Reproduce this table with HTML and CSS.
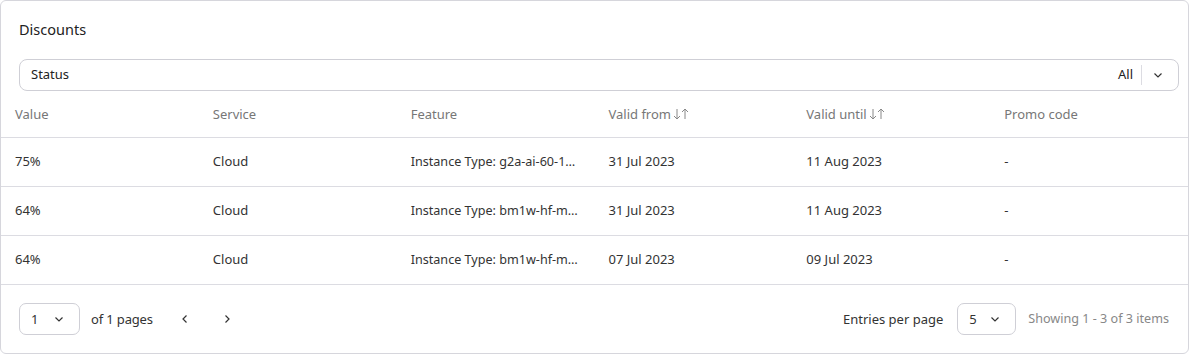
FILE: index.html
```html
<!DOCTYPE html>
<html>
<head>
<meta charset="utf-8">
<link rel="stylesheet" href="styles.css">
</head>
<body>
<div class="card">
  <div class="top">
    <div class="title">Discounts</div>
    <div class="filter">
      <span class="filter-label">Status</span>
      <span class="filter-value">All</span>
      <span class="filter-sep"></span>
      <svg class="chev" width="12" height="12" viewBox="0 0 12 12"><path d="M2.5 4.5 L6 8 L9.5 4.5" fill="none" stroke="#333" stroke-width="1.2"/></svg>
    </div>
  </div>
  <div class="table">
    <div class="row head">
      <div class="cell">Value</div>
      <div class="cell">Service</div>
      <div class="cell">Feature</div>
      <div class="cell sortable">Valid from <svg class="sort" width="16" height="12" viewBox="0 0 16 12"><path d="M4 1 V11 M1 8 L4 11 L7 8 M12 11 V1 M9 4 L12 1 L15 4" fill="none" stroke="#888" stroke-width="1"/></svg></div>
      <div class="cell sortable">Valid until <svg class="sort" width="16" height="12" viewBox="0 0 16 12"><path d="M4 1 V11 M1 8 L4 11 L7 8 M12 11 V1 M9 4 L12 1 L15 4" fill="none" stroke="#888" stroke-width="1"/></svg></div>
      <div class="cell">Promo code</div>
    </div>
    <div class="row">
      <div class="cell">75%</div>
      <div class="cell">Cloud</div>
      <div class="cell feat">Instance Type: g2a-ai-60-1…</div>
      <div class="cell">31 Jul 2023</div>
      <div class="cell">11 Aug 2023</div>
      <div class="cell">-</div>
    </div>
    <div class="row">
      <div class="cell">64%</div>
      <div class="cell">Cloud</div>
      <div class="cell feat">Instance Type: bm1w-hf-m…</div>
      <div class="cell">31 Jul 2023</div>
      <div class="cell">11 Aug 2023</div>
      <div class="cell">-</div>
    </div>
    <div class="row">
      <div class="cell">64%</div>
      <div class="cell">Cloud</div>
      <div class="cell feat">Instance Type: bm1w-hf-m…</div>
      <div class="cell">07 Jul 2023</div>
      <div class="cell">09 Jul 2023</div>
      <div class="cell">-</div>
    </div>
  </div>
  <div class="footer">
    <div class="pager">
      <div class="mini-select"><span>1</span><svg width="12" height="12" viewBox="0 0 12 12"><path d="M2.5 4.5 L6 8 L9.5 4.5" fill="none" stroke="#333" stroke-width="1.2"/></svg></div>
      <span class="pages">of 1 pages</span>
      <svg class="nav prev" width="12" height="12" viewBox="0 0 12 12"><path d="M7.5 2.5 L4 6 L7.5 9.5" fill="none" stroke="#333" stroke-width="1.2"/></svg>
      <svg class="nav next" width="12" height="12" viewBox="0 0 12 12"><path d="M4.5 2.5 L8 6 L4.5 9.5" fill="none" stroke="#333" stroke-width="1.2"/></svg>
    </div>
    <div class="entries">
      <span class="entries-label">Entries per page</span>
      <div class="mini-select"><span>5</span><svg width="12" height="12" viewBox="0 0 12 12"><path d="M2.5 4.5 L6 8 L9.5 4.5" fill="none" stroke="#333" stroke-width="1.2"/></svg></div>
      <span class="showing">Showing 1 - 3 of 3 items</span>
    </div>
  </div>
</div>
</body>
</html>
```

FILE: styles.css
```css
* { box-sizing: border-box; }
html, body { margin: 0; padding: 0; background: #fff; }
body {
  font-family: "Noto Sans", "Open Sans", sans-serif;
  font-size: 13px;
  color: #333;
}
.card {
  width: 1189px;
  height: 354px;
  border: 1px solid #d6d6dc;
  border-radius: 6px;
  display: flex;
  flex-direction: column;
}
.top { padding: 16px 9px 0 18px; }
.title {
  font-size: 14.5px;
  line-height: 24px;
  color: #222;
}
.filter {
  margin-top: 18px;
  height: 32px;
  border: 1px solid #cfcfd6;
  border-radius: 8px;
  display: flex;
  align-items: center;
  padding: 0 14px 2px 11px;
}
.filter-label { flex: 1; color: #222; }
.filter-value { color: #222; }
.filter-sep {
  width: 1px;
  height: 20px;
  background: #dcdce2;
  margin: 2px 10px 0 8px;
}
.chev { display: block; margin-top: 2px; }
.table { display: flex; flex-direction: column; }
.row {
  display: grid;
  grid-template-columns: repeat(6, minmax(0, 1fr));
  height: 49px;
  align-items: center;
  border-bottom: 1px solid #dcdce2;
  padding-bottom: 2px;
}
.row.head { height: 47px; color: #777; padding-bottom: 1px; }
.cell {
  padding: 0 14px;
  white-space: nowrap;
  overflow: hidden;
  text-overflow: ellipsis;
}
.feat { font-size: 12.6px; padding-right: 8px; }
.sortable { display: flex; align-items: center; }
.sort { display: block; margin-left: 2px; }
.footer {
  flex: 1;
  display: flex;
  align-items: center;
  justify-content: space-between;
  padding: 0 19px 1px 18px;
}
.pager, .entries { display: flex; align-items: center; }
.mini-select {
  width: 61px;
  height: 32px;
  border: 1px solid #cfcfd6;
  border-radius: 7px;
  display: flex;
  align-items: center;
  justify-content: space-between;
  padding: 0 14px 0 11px;
}
.mini-select svg { display: block; }
.entries .mini-select { width: 59px; }
.pages { margin-left: 11px; letter-spacing: -0.15px; }
.nav { display: block; }
.prev { margin-left: 26px; }
.next { margin-left: 30px; }
.entries-label { margin-right: 14px; }
.showing { margin-left: 12px; color: #888; font-size: 12.6px; }
```
